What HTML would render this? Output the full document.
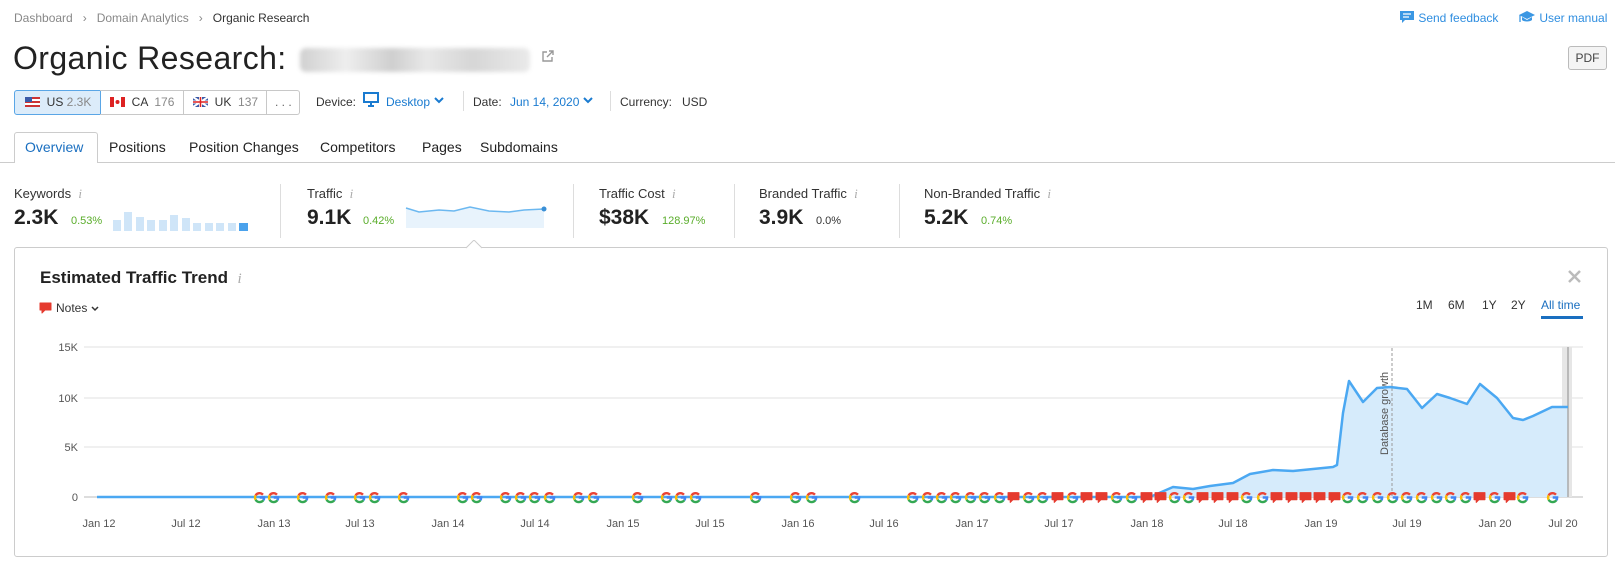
<!DOCTYPE html>
<html><head><meta charset="utf-8"><style>
*{margin:0;padding:0;box-sizing:border-box}
body{width:1615px;height:566px;background:#fff;font-family:"Liberation Sans",sans-serif;color:#333;position:relative;overflow:hidden}
.a{position:absolute;white-space:nowrap}
.bc{font-size:12px;color:#888;top:11px}
.lbl{font-size:13px;color:#333;top:186px}
.val{font-size:21px;font-weight:bold;color:#222;top:206px}
.pct{font-size:11px;color:#5aad2b;top:215px}
.info{font-family:"Liberation Serif",serif;font-style:italic;color:#aaa;font-size:13px}
.sep{position:absolute;width:1px;background:#ddd;top:184px;height:54px}
.btn{position:absolute;top:90px;height:25px;border:1px solid #c8c8c8;font-size:12px;line-height:23px;padding-left:10px;color:#333}
.tab{position:absolute;top:139px;font-size:14px;color:#222}
.tl{position:absolute;top:298px;font-size:12px;color:#333}
.xl{font-size:11px;fill:#555;font-family:"Liberation Sans",sans-serif;text-anchor:middle}
.yl{font-size:11px;fill:#555;font-family:"Liberation Sans",sans-serif;text-anchor:end}
</style></head><body>
<div class="a bc" style="left:14px">Dashboard &nbsp;&nbsp;›&nbsp;&nbsp; Domain Analytics &nbsp;&nbsp;›&nbsp;&nbsp; <span style="color:#333">Organic Research</span></div>
<div class="a" style="left:1399px;top:10px;font-size:12px;color:#2f8ee0">
<svg width="16" height="15" style="vertical-align:-3px"><path d="M1 1h14v9H6l-3 3v-3H1z" fill="#3b97e3"/><path d="M4 4h8M4 7h6" stroke="#fff" stroke-width="1.2"/></svg>&nbsp;Send feedback</div>
<div class="a" style="left:1518px;top:10px;font-size:12px;color:#2f8ee0">
<svg width="18" height="15" style="vertical-align:-3px"><path d="M9 1L17 5L9 9L1 5z" fill="#3b97e3"/><path d="M4 7v3c2 2 8 2 10 0V7L9 10z" fill="#3b97e3"/><path d="M2 5v7" stroke="#3b97e3" stroke-width="1.3"/></svg>&nbsp;User manual</div>
<div class="a" style="left:1568px;top:46px;width:39px;height:24px;border:1px solid #bbb;border-radius:3px;background:#f4f4f4;font-size:12px;line-height:22px;text-align:center;color:#444">PDF</div>

<div class="a" style="left:13px;top:40px;font-size:32px;letter-spacing:0.4px;color:#222">Organic Research:</div>
<div class="a" style="left:300px;top:48px;width:230px;height:24px;background:linear-gradient(90deg,#d0d0d0,#eee 20%,#cfcfcf 40%,#e8e8e8 55%,#d6d6d6 75%,#eaeaea);filter:blur(2px);border-radius:6px"></div>
<svg class="a" style="left:541px;top:50px" width="13" height="13"><path d="M6 2H2v9h9V7" fill="none" stroke="#999" stroke-width="1.4"/><path d="M8 1h4v4M12 1L6 7" fill="none" stroke="#999" stroke-width="1.4"/></svg>

<div class="btn" style="left:14px;width:87px;background:#dcecfa;border-color:#5aa6e6;border-radius:3px 0 0 3px"><svg width="15" height="10" style="vertical-align:-1px"><rect width="15" height="10" fill="#c33"/><rect y="2" width="15" height="2" fill="#fff"/><rect y="6" width="15" height="2" fill="#fff"/><rect width="7" height="5" fill="#3a5aa8"/></svg>&nbsp; US <span style="color:#888">2.3K</span></div>
<div class="btn" style="left:100px;width:84px;border-left:none"><svg width="15" height="10" style="vertical-align:-1px"><rect width="15" height="10" fill="#fff"/><rect width="4" height="10" fill="#d22"/><rect x="11" width="4" height="10" fill="#d22"/><circle cx="7.5" cy="5" r="2" fill="#d22"/></svg>&nbsp; CA &nbsp;<span style="color:#888">176</span></div>
<div class="btn" style="left:183px;width:84px;border-left:none"><svg width="15" height="10" style="vertical-align:-1px"><rect width="15" height="10" fill="#3a5aa8"/><path d="M0 0L15 10M15 0L0 10" stroke="#fff" stroke-width="2"/><path d="M7.5 0v10M0 5h15" stroke="#fff" stroke-width="3"/><path d="M7.5 0v10M0 5h15" stroke="#d22" stroke-width="1.5"/></svg>&nbsp; UK &nbsp;<span style="color:#888">137</span></div>
<div class="btn" style="left:266px;width:34px;border-left:none;border-radius:0 3px 3px 0;padding-left:9px;color:#666">. . .</div>

<div class="a" style="left:316px;top:95px;font-size:12px;color:#333">Device:</div>
<svg class="a" style="left:363px;top:92px" width="16" height="15"><rect x="1" y="1" width="14" height="9" fill="none" stroke="#1a7bd0" stroke-width="2"/><path d="M5 14h6M8 10v4" stroke="#1a7bd0" stroke-width="2"/></svg>
<div class="a" style="left:386px;top:95px;font-size:12px;color:#1a7bd0">Desktop</div>
<svg class="a" style="left:434px;top:97px" width="10" height="7"><path d="M1 1l4 4 4-4" fill="none" stroke="#1a7bd0" stroke-width="2"/></svg>
<div class="a" style="left:463px;top:91px;width:1px;height:20px;background:#ddd"></div>
<div class="a" style="left:473px;top:95px;font-size:12px;color:#333">Date:</div>
<div class="a" style="left:510px;top:95px;font-size:12px;color:#1a7bd0">Jun 14, 2020</div>
<svg class="a" style="left:583px;top:97px" width="10" height="7"><path d="M1 1l4 4 4-4" fill="none" stroke="#1a7bd0" stroke-width="2"/></svg>
<div class="a" style="left:610px;top:91px;width:1px;height:20px;background:#ddd"></div>
<div class="a" style="left:620px;top:95px;font-size:12px;color:#333">Currency: &nbsp;&nbsp;USD</div>

<div class="a" style="left:0;top:162px;width:1615px;height:1px;background:#ccc"></div>
<div class="a" style="left:14px;top:132px;width:84px;height:31px;border:1px solid #ccc;border-bottom:none;background:#fff;border-radius:3px 3px 0 0"></div>
<div class="tab" style="left:25px;color:#1a6fc0">Overview</div>
<div class="tab" style="left:109px">Positions</div>
<div class="tab" style="left:189px">Position Changes</div>
<div class="tab" style="left:320px">Competitors</div>
<div class="tab" style="left:422px">Pages</div>
<div class="tab" style="left:480px">Subdomains</div>

<div class="a lbl" style="left:14px">Keywords &nbsp;<span class="info">i</span></div>
<div class="a val" style="left:14px">2.3K</div><div class="a pct" style="left:71px">0.53%</div>
<svg class="a" style="left:113px;top:209px" width="140" height="22">
<g fill="#cfe5f8"><rect x="0" y="11" width="8" height="11"/><rect x="11" y="3" width="8" height="19"/><rect x="23" y="8" width="8" height="14"/><rect x="34" y="11" width="8" height="11"/><rect x="46" y="11" width="8" height="11"/><rect x="57" y="6" width="8" height="16"/><rect x="69" y="9" width="8" height="13"/><rect x="80" y="14" width="8" height="8"/><rect x="92" y="14" width="8" height="8"/><rect x="103" y="14" width="8" height="8"/><rect x="115" y="14" width="8" height="8"/></g><rect x="126" y="14" width="9" height="8" fill="#4aa2ec"/></svg>
<div class="sep" style="left:280px"></div>
<div class="a lbl" style="left:307px">Traffic &nbsp;<span class="info">i</span></div>
<div class="a val" style="left:307px">9.1K</div><div class="a pct" style="left:363px">0.42%</div>
<svg class="a" style="left:404px;top:204px" width="145" height="26"><path d="M2 4L15 8 35 6 50 7 66 3 85 7 105 8 120 6 140 5V24H2z" fill="#e8f3fc"/><path d="M2 4L15 8 35 6 50 7 66 3 85 7 105 8 120 6 140 5" fill="none" stroke="#6cb8f0" stroke-width="1.5"/><circle cx="140" cy="5" r="2.5" fill="#3a8fd6"/></svg>
<div class="sep" style="left:573px"></div>
<div class="a lbl" style="left:599px">Traffic Cost &nbsp;<span class="info">i</span></div>
<div class="a val" style="left:599px">$38K</div><div class="a pct" style="left:662px">128.97%</div>
<div class="sep" style="left:734px"></div>
<div class="a lbl" style="left:759px">Branded Traffic &nbsp;<span class="info">i</span></div>
<div class="a val" style="left:759px">3.9K</div><div class="a pct" style="left:816px;color:#333">0.0%</div>
<div class="sep" style="left:899px"></div>
<div class="a lbl" style="left:924px">Non-Branded Traffic &nbsp;<span class="info">i</span></div>
<div class="a val" style="left:924px">5.2K</div><div class="a pct" style="left:981px">0.74%</div>

<div class="a" style="left:14px;top:247px;width:1594px;height:310px;border:1px solid #ccc;border-radius:3px"></div>
<svg class="a" style="left:466px;top:240px" width="16" height="9"><path d="M0 8L8 0 16 8" fill="#fff" stroke="#ccc"/></svg>
<div class="a" style="left:40px;top:268px;font-size:17px;font-weight:bold;color:#222">Estimated Traffic Trend &nbsp;<span class="info" style="font-weight:normal;font-size:15px">i</span></div>
<svg class="a" style="left:39px;top:302px" width="13" height="13"><path d="M1 1h11v7H6l-3 3V8H1z" fill="#e53a2e" stroke="#e53a2e" stroke-linejoin="round"/></svg>
<div class="a" style="left:56px;top:301px;font-size:12px;color:#333">Notes</div>
<svg class="a" style="left:91px;top:306px" width="8" height="6"><path d="M1 1l3 3 3-3" fill="none" stroke="#333" stroke-width="1.5"/></svg>
<svg class="a" style="left:1568px;top:270px" width="13" height="13"><path d="M1 1l11 11M12 1L1 12" stroke="#bbb" stroke-width="2.5"/></svg>
<div class="tl" style="left:1416px">1M</div>
<div class="tl" style="left:1448px">6M</div>
<div class="tl" style="left:1482px">1Y</div>
<div class="tl" style="left:1511px">2Y</div>
<div class="tl" style="left:1541px;color:#1a6fc0">All time</div>
<div class="a" style="left:1541px;top:316px;width:42px;height:3px;background:#1a6fc0"></div>

<svg class="a" style="left:0;top:0" width="1615" height="566">
<defs>
<symbol id="g" viewBox="0 0 12 12"><g fill="none" stroke-width="2.2"><path d="M9.2 3.4A4.3 4.3 0 0 0 2.4 4" stroke="#ea4335"/><path d="M2.4 4A4.3 4.3 0 0 0 2.4 8" stroke="#fbbc05"/><path d="M2.4 8A4.3 4.3 0 0 0 9.6 8.5" stroke="#34a853"/><path d="M9.6 8.5A4.3 4.3 0 0 0 10.3 6H6.2" stroke="#4285f4"/></g></symbol>
<symbol id="n" viewBox="0 0 12 12"><path d="M1 1.5h10v6.5H5.5L3 10.5V8H1z" fill="#e53a2e" stroke="#e53a2e" stroke-linejoin="round"/></symbol>
</defs>
<g stroke="#e2e2e2"><path d="M84 347H1583M84 398H1583M84 447H1583"/></g>
<path d="M84 497H1583" stroke="#bbb"/>
<text class="yl" x="78" y="351">15K</text><text class="yl" x="78" y="402">10K</text><text class="yl" x="78" y="451">5K</text><text class="yl" x="78" y="501">0</text>
<rect x="1562" y="347" width="10" height="150" fill="#e6e6e6"/>
<path d="M1150 497L1173 487 1193 489 1210 486 1233 483 1250 474 1273 470 1293 471 1333 467 1337 465 1343 413 1349 381 1363 402 1377 388 1390 387 1407 389 1422 408 1437 394 1450 398 1467 404 1480 384 1497 398 1513 418 1523 420 1533 416 1552 407 1568 407V497z" fill="#d6ebfb"/>
<path d="M1392 348V497" stroke="#999" stroke-dasharray="3,2"/>
<text x="0" y="0" transform="translate(1388,455) rotate(-90)" font-size="11" fill="#555" font-family="Liberation Sans,sans-serif">Database growth</text>
<path d="M1568 347V497" stroke="#aaa" stroke-width="1.5"/>
<path d="M97 497H1150L1173 487 1193 489 1210 486 1233 483 1250 474 1273 470 1293 471 1333 467 1337 465 1343 413 1349 381 1363 402 1377 388 1390 387 1407 389 1422 408 1437 394 1450 398 1467 404 1480 384 1497 398 1513 418 1523 420 1533 416 1552 407 1568 407" fill="none" stroke="#4ba8f2" stroke-width="2.5" stroke-linejoin="round"/>
<g>
<use href="#g" x="253" y="491" width="13" height="13"/><use href="#g" x="267" y="491" width="13" height="13"/><use href="#g" x="296" y="491" width="13" height="13"/><use href="#g" x="324" y="491" width="13" height="13"/><use href="#g" x="353" y="491" width="13" height="13"/><use href="#g" x="368" y="491" width="13" height="13"/><use href="#g" x="397" y="491" width="13" height="13"/><use href="#g" x="456" y="491" width="13" height="13"/><use href="#g" x="470" y="491" width="13" height="13"/><use href="#g" x="499" y="491" width="13" height="13"/><use href="#g" x="514" y="491" width="13" height="13"/><use href="#g" x="528" y="491" width="13" height="13"/><use href="#g" x="543" y="491" width="13" height="13"/><use href="#g" x="572" y="491" width="13" height="13"/><use href="#g" x="587" y="491" width="13" height="13"/><use href="#g" x="631" y="491" width="13" height="13"/><use href="#g" x="660" y="491" width="13" height="13"/><use href="#g" x="674" y="491" width="13" height="13"/><use href="#g" x="689" y="491" width="13" height="13"/><use href="#g" x="749" y="491" width="13" height="13"/><use href="#g" x="789" y="491" width="13" height="13"/><use href="#g" x="805" y="491" width="13" height="13"/><use href="#g" x="848" y="491" width="13" height="13"/><use href="#g" x="906" y="491" width="13" height="13"/><use href="#g" x="921" y="491" width="13" height="13"/><use href="#g" x="935" y="491" width="13" height="13"/><use href="#g" x="949" y="491" width="13" height="13"/><use href="#g" x="964" y="491" width="13" height="13"/><use href="#g" x="978" y="491" width="13" height="13"/><use href="#g" x="993" y="491" width="13" height="13"/>
<use href="#n" x="1007" y="491" width="13" height="13"/><use href="#g" x="1022" y="491" width="13" height="13"/><use href="#g" x="1036" y="491" width="13" height="13"/><use href="#n" x="1051" y="491" width="13" height="13"/><use href="#g" x="1066" y="491" width="13" height="13"/><use href="#n" x="1080" y="491" width="13" height="13"/><use href="#n" x="1095" y="491" width="13" height="13"/><use href="#g" x="1110" y="491" width="13" height="13"/><use href="#g" x="1125" y="491" width="13" height="13"/><use href="#n" x="1140" y="491" width="13" height="13"/><use href="#n" x="1154" y="491" width="13" height="13"/><use href="#g" x="1168" y="491" width="13" height="13"/><use href="#g" x="1182" y="491" width="13" height="13"/><use href="#n" x="1196" y="491" width="13" height="13"/><use href="#n" x="1211" y="491" width="13" height="13"/><use href="#n" x="1226" y="491" width="13" height="13"/><use href="#g" x="1240" y="491" width="13" height="13"/><use href="#g" x="1256" y="491" width="13" height="13"/><use href="#n" x="1270" y="491" width="13" height="13"/><use href="#n" x="1285" y="491" width="13" height="13"/><use href="#n" x="1299" y="491" width="13" height="13"/><use href="#n" x="1313" y="491" width="13" height="13"/><use href="#n" x="1328" y="491" width="13" height="13"/><use href="#g" x="1341" y="491" width="13" height="13"/><use href="#g" x="1356" y="491" width="13" height="13"/><use href="#g" x="1371" y="491" width="13" height="13"/><use href="#g" x="1386" y="491" width="13" height="13"/><use href="#g" x="1400" y="491" width="13" height="13"/><use href="#g" x="1415" y="491" width="13" height="13"/><use href="#g" x="1430" y="491" width="13" height="13"/><use href="#g" x="1444" y="491" width="13" height="13"/><use href="#g" x="1459" y="491" width="13" height="13"/><use href="#n" x="1473" y="491" width="13" height="13"/><use href="#g" x="1488" y="491" width="13" height="13"/><use href="#n" x="1503" y="491" width="13" height="13"/><use href="#g" x="1516" y="491" width="13" height="13"/><use href="#g" x="1546" y="491" width="13" height="13"/>
</g>
<text class="xl" x="99" y="527">Jan 12</text><text class="xl" x="186" y="527">Jul 12</text><text class="xl" x="274" y="527">Jan 13</text><text class="xl" x="360" y="527">Jul 13</text><text class="xl" x="448" y="527">Jan 14</text><text class="xl" x="535" y="527">Jul 14</text><text class="xl" x="623" y="527">Jan 15</text><text class="xl" x="710" y="527">Jul 15</text><text class="xl" x="798" y="527">Jan 16</text><text class="xl" x="884" y="527">Jul 16</text><text class="xl" x="972" y="527">Jan 17</text><text class="xl" x="1059" y="527">Jul 17</text><text class="xl" x="1147" y="527">Jan 18</text><text class="xl" x="1233" y="527">Jul 18</text><text class="xl" x="1321" y="527">Jan 19</text><text class="xl" x="1407" y="527">Jul 19</text><text class="xl" x="1495" y="527">Jan 20</text><text class="xl" x="1563" y="527">Jul 20</text>
</svg>
</body></html>
